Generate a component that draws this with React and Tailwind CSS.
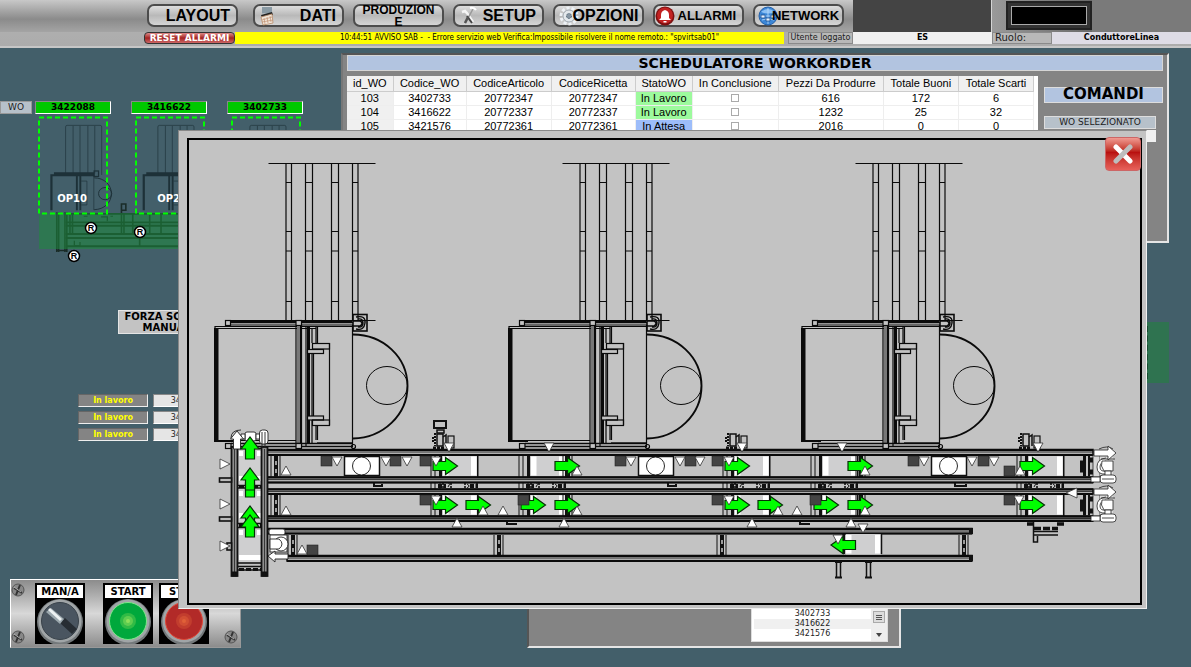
import React from "react";

const MACHINE_OFFSETS = [0, 294, 587];

function Machine({ x }) {
  return (
    <g transform={`translate(${x} 0)`} fill="none" stroke="#0a0a0a" strokeWidth="1.2">
      <path d="M268.500 163.500H375.500" />
      {[[286, 291.5], [305.5, 312.5], [331.5, 338.5], [352.5, 358]].map(([a, b]) => (
        <path key={a} d={`M${a} 163V320M${b} 163V320M${a} 182.500H${b}M${a} 231.500H${b}M${a} 251H${b}M${a} 301.500H${b}`} />
      ))}
      <path d="M225 320.500H375.500M225 325H353M231 322.700H353M215 326.500H353" />
      <path d="M231 321.500H352" strokeWidth="2" />
      <rect x="225.500" y="320.500" width="5" height="5" fill="#c3c3c3" />
      <rect x="296" y="320.500" width="5.500" height="5" fill="#c3c3c3" />
      <rect x="214" y="328" width="4.500" height="113" fill="#0a0a0a" stroke="none" />
      <path d="M215 326V329M218 328.500H316M218 440.500H296M214 441.500H234" />
      <rect x="297" y="326" width="3" height="118" fill="#777" stroke="none" />
      <path d="M296 326V444M301.500 325V447M306 326V446M316 327V343M317.500 327V343" />
      <path d="M301 326V444" strokeWidth="2" />
      <path d="M308.500 326V444" strokeWidth="3" />
      <path d="M312 329V343M312 353V443M313.500 353V416M316 425V440M317.500 425V440" />
      <rect x="312.500" y="343.500" width="17" height="5.500" />
      <rect x="307.500" y="349.500" width="16" height="4" fill="#c3c3c3" />
      <rect x="307.500" y="416" width="16" height="4" fill="#c3c3c3" />
      <rect x="312.500" y="420" width="17" height="5.500" />
      <path d="M329.500 343V425M352.500 325V447" />
      <rect x="353" y="314.500" width="14" height="16.500" strokeWidth="1.600" />
      <path d="M353 321H360Q364 323 360 326H353M356 317Q366 315 365 323T356 329M358 319Q363 318 363 323T358 327" strokeWidth="1.400" />
      <path d="M353 334.500C383 334.500 407.500 357 407.500 386S383 438 353 438.500" strokeWidth="1.900" />
      <ellipse cx="387" cy="385.500" rx="20.500" ry="19" strokeWidth="1" />
      <path d="M231 443.500H353M231 446.500H353M317 443H353" strokeWidth="1.500" />
      <rect x="225.500" y="443.500" width="5.500" height="5" fill="#c3c3c3" />
      <rect x="296" y="443.500" width="5.500" height="5" fill="#c3c3c3" />
      <circle cx="353.500" cy="446.500" r="2" />
    </g>
  );
}

function Beam({ x1, x2, y, h, dark }) {
  return (
    <g stroke="#0a0a0a">
      <rect x={x1} y={y} width={x2 - x1} height={h} fill={dark ? "#777" : "#b0b0b0"} strokeWidth="1.500" />
      <path d={`M${x1} ${y + 0.5}H${x2}`} strokeWidth="2" />
      <path d={`M${x1} ${y + 2.5}H${x2}`} strokeWidth="0.700" />
      <path d={`M${x1} ${y + h}H${x2}`} strokeWidth="2" />
    </g>
  );
}

function Plate({ x, y, w = 34, h = 21 }) {
  return (
    <g>
      <rect x={x} y={y} width={w} height={h} fill="#cfcfd0" />
      <rect x={x} y={y + 1} width="5.500" height={h - 2} fill="#fff" />
      <rect x={x + w - 6} y={y + 1} width="5.500" height={h - 2} fill="#fff" />
    </g>
  );
}

function Stop({ x, y, h = 22 }) {
  return (
    <g>
      <rect x={x} y={y} width="4" height={h} fill="#111" />
      <path d={`M${x + 2} ${y + 5}v4M${x + 2} ${y + 13}v4`} stroke="#ccc" strokeWidth="1.500" />
      <path d={`M${x + 6} ${y}v${h}M${x - 3} ${y}v${h}`} stroke="#111" strokeWidth="1" />
    </g>
  );
}

function Scanner({ x, tall }) {
  return (
    <g fill="none" stroke="#111" strokeWidth="1.500">
      {tall && <rect x={x - 7} y="421" width="12" height="7" strokeWidth="2" />}
      {tall && <path d={`M${x - 4} 430h7v3h-7z`} />}
      <rect x={x - 4} y="434" width="6" height="12" />
      <path d={`M${x - 6} 433v13M${x - 8} 437v5`} strokeDasharray="2 1" strokeWidth="2" />
      <path d={`M${x + 2} 437l3 -2v11`} />
      <rect x={x + 7} y="436" width="6" height="12" strokeWidth="1.200" />
      <path d={`M${x - 8} 448H${x + 4}`} strokeWidth="3" strokeDasharray="3 1" />
    </g>
  );
}

function Motor({ x, y }) {
  return (
    <g fill="#fff" stroke="#222" strokeWidth="0.800">
      <rect x={x} y={y - 11} width="7" height="22" fill="#d8d8d8" />
      <rect x={x + 7} y={y - 10} width="13" height="19" fill="#dcdcdc" stroke="none" />
      <path d={`M${x + 13} ${y - 8}q-9 1 -9 9t9 7`} />
      <path d={`M${x + 13} ${y - 5}q-6 1 -6 6t6 4`} fill="none" />
      <path d={`M${x + 9} ${y - 5}h11v10h-9q-4 -5 -2 -10z`} />
      <rect x={x + 12} y={y + 5} width="6" height="5" />
      <rect x={x + 7} y={y + 9} width="16" height="8" rx="3" />
      <path d={`M${x - 2} ${y + 11}h9v5h-9zM${x + 9} ${y + 13}h12`} />
      <path d={`M${x + 6} ${y - 17}q8 -4 14 0M${x + 8} ${y - 7}h14`} fill="none" />
      <path d={`M${x + 1} ${y - 16}h14v-4l8 7l-8 7v-4h-14z`} />
    </g>
  );
}

const CROSS_X = [443, 531, 735, 823, 1029];

function Line() {
  return (
    <g>
      {CROSS_X.map((x) => (
        <g key={x} fill="none" stroke="#111" strokeWidth="1">
          <path d={`M${x - 12} 456v66M${x - 8} 456v66M${x - 3} 456v60`} />
          <path d={`M${x} 483v6M${x + 8} 483v6M${x + 22} 483v6M${x + 34} 483v6`} strokeWidth="1.600" strokeDasharray="2 1" />
          <path d={`M${x - 5} 486h8M${x + 27} 486h8`} strokeWidth="4" strokeDasharray="4 1.500" />
          <path d={`M${x + 5} 487q3 -3 0 -5M${x + 24} 484q4 2 0 4`} />
        </g>
      ))}
      {[455.5, 494.5].map((y) => CROSS_X.map((x) => (
        <g key={`${x}-${y}`}>
          <Plate x={x} y={y} />
          <rect x={x - 4} y={y} width="3" height="22" fill="#111" />
          <rect x={x + 34} y={y} width="1.500" height="22" fill="#111" />
        </g>
      )))}
      {[566, 859].map((x) => <g key={x}><Stop x={x} y={455} /><Stop x={x} y={494} /></g>)}
      <Beam x1={262} x2={1093} y={449.5} h={5.5} />
      <Beam x1={267} x2={1093} y={477} h={5.5} />
      <Beam x1={262} x2={1093} y={489} h={5} />
      <Beam x1={267} x2={1093} y={516} h={5} dark />
      <Beam x1={267} x2={972} y={528.5} h={5} />
      <Beam x1={287} x2={972} y={555.5} h={5.5} />
      <path d="M374 483v3h8v-2M668 483v3h8v-2M955 483v3h11v-2M507 522v2h10M800 522v2h10" stroke="#111" strokeWidth="2" fill="none" />

      <Stop x={274} y={456} h={21} />
      <Stop x={274} y={495} h={21} />
      <Stop x={291} y={535} h={20} />
      <Stop x={497} y={535} h={20} />
      <Stop x={720} y={535} h={20} />
      <Stop x={962} y={535} h={20} />
      <path d="M970 529h2v4h-2zM970 556h2v4h-2z" stroke="#111" strokeWidth="2" />
      {[455.5, 494.5].map((y) => (
        <g key={y} fill="#111">
          <rect x="1080" y={y + 5} width="4" height="12" />
          <rect x="1083" y={y} width="3" height="21" />
          <rect x="1088" y={y} width="2" height="21" />
          <rect x="1090" y={y + 2} width="3" height="5" />
          <rect x="1090" y={y + 14} width="3" height="5" />
        </g>
      ))}

      {/* vertical conveyor */}
      <rect x="238" y="448" width="24" height="114" fill="#cfcfd0" />
      <path d="M239 451h4v5h-4zM257 451h4v5h-4zM239 476h4v5h-4zM257 476h4v5h-4zM239 491h4v5h-4zM257 491h4v5h-4zM239 513h4v5h-4zM257 513h4v5h-4zM239 530h4v5h-4zM257 530h4v5h-4zM239 555h22v5h-22z" fill="#fff" />
      <path d="M238 448.500h24M238 485.500h24M238 488h24M238 523.500h24M238 527.500h24M238 563h24M238 566.500h24M238 570h24" stroke="#111" strokeWidth="1.500" />
      <path d="M239 486.500h23M239 525.500h23M239 569.500h23" stroke="#111" strokeWidth="3" strokeDasharray="5 2" />
      {[231.5, 261.5].map((x) => (
        <g key={x} stroke="#111">
          <rect x={x} y="447" width="6" height="129" fill="#8e8e8e" strokeWidth="1.800" />
          <path d={`M${x + 3} 449V576`} strokeWidth="0.700" />
          <rect x={x + 1} y="572" width="4" height="4" fill="#111" />
        </g>
      ))}
      <g fill="#bbb" stroke="#111" strokeWidth="1.600">
        <rect x="219.500" y="478" width="12" height="4" />
        <rect x="219.500" y="517" width="12" height="4" />
        <rect x="227" y="543" width="4.500" height="7" />
      </g>
      <g fill="#fff" stroke="#222" strokeWidth="0.900">
        <rect x="245" y="432" width="11" height="9" rx="2" />
        <path d="M241 434h4v5h-4zM256 434h4v5h-4z" />
        <rect x="259.500" y="430" width="8.500" height="14" rx="3" />
        <path d="M262 432v16M265 432v16" fill="none" />
        <path d="M231 438q0 -8 10 -8" fill="none" />
        <path d="M233.500 449v-10h-3l6.500 -8l6.500 8h-3v10z" />
        <rect x="269" y="529" width="16" height="6" rx="2" />
        <rect x="270" y="535" width="17" height="17" />
        <circle cx="281" cy="544" r="7" />
        <path d="M270 539h9q6 5 0 10h-9z" />
        <path d="M288 559H275v3l-7 -6l7 -5v3h13z" />
      </g>

      <Plate x={846} y={534} w={35} h={20.5} />
      <rect x="842" y="534" width="3" height="20" fill="#111" />
      <path d="M881.500 534v20M836.500 561v17M840.500 561v17M866.500 561v17M870.500 561v17" stroke="#111" strokeWidth="1.500" />
      <path d="M835 562h7M865 562h7M835 577.500h7M865 577.500h7" stroke="#111" strokeWidth="2" />
      <g stroke="#111" fill="#777">
        <path d="M1033.500 522v20h4v-6M1034 531.500h24M1034 535h24" strokeWidth="1.500" fill="none" />
        <path d="M1027 524h7M1057 524h7M1034 528.500h24" strokeWidth="3.500" strokeDasharray="7 2" />
      </g>

      <Scanner x={441} tall />
      <Scanner x={734} />
      <Scanner x={1027} />
      <Motor x={1093} y={466} />
      <Motor x={1093} y={505} />

      {/* pallet positions */}
      {[344.5, 638.5, 931.5].map((x) => (
        <g key={x} stroke="#111">
          <rect x={x} y="456.500" width="35" height="19" fill="#fff" strokeWidth="1.500" />
          <circle cx={x + 17} cy="466" r="9" fill="#fff" strokeWidth="0.900" />
        </g>
      ))}
    </g>
  );
}

const SQUARES = [
  [321, 456], [390, 456], [420, 456], [615, 456], [685, 456], [712, 456], [908, 456], [978, 456], [1004, 466],
  [420, 495], [712, 495], [1004, 495], [307, 545],
];
const FRONT_SQUARES = [[518, 495], [810, 495]];
const RIGHT_ARROWS = [
  [433, 466], [555, 466], [725, 466], [848, 466], [1020, 466],
  [433, 505], [466, 505], [521, 505], [555, 505], [725, 505], [758, 505], [814, 505], [848, 505], [1020, 505],
];
const DOWN = [
  [337, 457], [386, 457], [407, 457], [436, 457], [631, 457], [680, 457], [700, 457], [729, 457], [924, 457], [972, 457], [994, 457],
  [449, 443], [549, 443], [742, 443], [842, 443], [1038, 443], [436, 496], [729, 496], [1019, 496], [863, 524], [838, 535],
];
const UP = [
  [286, 466], [577, 466], [865, 466], [1020, 466], [286, 506], [483, 506], [503, 506], [577, 506], [778, 506], [797, 506], [865, 506],
  [457, 518], [564, 518], [752, 518], [851, 518], [302, 545],
];

function PlantDrawing() {
  return (
    <svg viewBox="189 140 951 463" className="block w-full" role="img" aria-label="Linea">
      {MACHINE_OFFSETS.map((x) => <Machine key={x} x={x} />)}
      <Line />
      <g fill="#444" stroke="#222" strokeWidth="0.600">
        {SQUARES.map(([x, y]) => <rect key={`${x}-${y}`} x={x} y={y} width="11" height="10" />)}
      </g>
      <g fill="#00ff00" stroke="#063006" strokeWidth="1.200">
        {RIGHT_ARROWS.map(([x, y]) => (
          <path key={`${x}-${y}`} d={`M${x} ${y - 4.5}h12.500v-4l12 8.500l-12 8.500v-4h-12.500z`} />
        ))}
        <path d="M855.500 540.500h-12.500v-4l-12 8.500l12 8.500v-4h12.500z" />
        <path d="M245.500 483h9v14h-9z" />
        {[437, 468, 506, 515].map((y) => (
          <path key={y} d={`M245.500 ${y + 22}v-10h-4.500l9 -12l9 12h-4.500v10z`} />
        ))}
      </g>
      <g fill="#444" stroke="#222" strokeWidth="0.600">
        {FRONT_SQUARES.map(([x, y]) => <rect key={x} x={x} y={y} width="11" height="10" />)}
      </g>
      <g fill="#fff" stroke="#333" strokeWidth="0.800">
        {DOWN.map(([x, y]) => <path key={`${x}-${y}`} d={`M${x - 5} ${y}h10l-5 9z`} />)}
        {UP.map(([x, y]) => <path key={`${x}-${y}`} d={`M${x - 5} ${y + 9}h10l-5 -9z`} />)}
        {[464, 504, 546].map((y) => <path key={y} d={`M220 ${y - 5}v10l10 -5z`} />)}
        <path d="M1077 488v10l-11 -5z" />
      </g>
    </svg>
  );
}

function Overview() {
  return (
    <svg viewBox="36 114 304 150" className="ml-9 block h-[150px] w-[304px]" role="img" aria-label="Panoramica linea">
      <g transform="translate(-16.700 75.500) scale(0.314 0.306)" opacity="0.800">
        {MACHINE_OFFSETS.map((x) => (
          <g key={x} fill="none" stroke="#14262c" strokeWidth="3">
            <path d={`M${x + 262} 325V168q0 -5 5 -5h105q5 0 5 5v157M${x + 286} 165V320M${x + 308} 165V320M${x + 333} 165V320M${x + 355} 165V320`} strokeWidth="2" />
            <path d={`M${x + 217} 440V326H${x + 353}M${x + 225} 320H${x + 353}`} strokeWidth="7" />
            <path d={`M${x + 298} 326V440M${x + 309} 326V440`} strokeWidth="6" />
            <path d={`M${x + 312} 345h18v78h-18M${x + 352} 325V440`} strokeWidth="2" />
            <rect x={x + 353} y="312" width="14" height="18" strokeWidth="4" />
            <path d={`M${x + 353} 334.500C${x + 385} 334.500 ${x + 408} 357 ${x + 408} 386S${x + 385} 438 ${x + 353} 438.500`} />
            <ellipse cx={x + 388} cy="386" rx="21" ry="20" />
          </g>
        ))}
        <g fill="none" stroke="#102018" strokeWidth="6">
          <path d="M262 452H1090M262 480H1090M262 491H1090M262 518H1090M262 531H970M262 558H970" />
          <path d="M234 448V577M240 448V577M260 448V577M266 448V577M234 572H264" strokeWidth="5" />
          <path d="M276 452V518M284 452V518M440 440V520M448 452V520M476 452V520M530 452V520M566 452V520M498 530V558M440 420h14v20h-14z" strokeWidth="5" />
          <path d="M320 460h12M375 462h20v14M405 460h8M290 540v16h18v-12" strokeWidth="4" />
        </g>
      </g>
      <rect x="39" y="213" width="300" height="36" fill="#1e8a3c" opacity="0.550" />
      <g fill="none" stroke="#00ff00" strokeWidth="2" strokeDasharray="5 3">
        <rect x="39" y="117.500" width="68" height="96" />
        <rect x="136" y="117.500" width="68" height="96" />
        <rect x="232" y="117.500" width="68" height="96" />
      </g>
      <g className="font-['DejaVu_Sans'] text-[10px] font-bold" fill="#fff" textAnchor="middle">
        <text x="72" y="202">OP10</text>
        <text x="172" y="202">OP20</text>
      </g>
      <g className="font-['Liberation_Sans'] text-[9px] font-bold" textAnchor="middle">
        {[[91, 228], [140, 232], [74, 256]].map(([x, y]) => (
          <g key={x}>
            <circle cx={x} cy={y} r="5.500" fill="#fff" stroke="#000" strokeWidth="1.500" />
            <text x={x} y={y + 3} fill="#000">R</text>
          </g>
        ))}
      </g>
    </svg>
  );
}

function NavIcon({ kind }) {
  if (kind === "dati") {
    return (
      <svg viewBox="0 0 16 20" className="h-5 w-4 shrink-0">
        <path d="M3 1h10v7H3z" fill="#aab4bb" />
        <path d="M3 2h10M3 4h10M3 6h10" stroke="#5c7480" strokeWidth="0.800" />
        <path d="M2 9l11 -3l1 3l-11 3z" fill="#222" />
        <path d="M2 11l11 -3l1 9l-10 2z" fill="#f1e6da" stroke="#b98b68" strokeWidth="0.800" />
        <path d="M5 12l1 6M8 11l1 6M11 10l1 6M3 14l10 -3M3 16l11 -2" stroke="#c08f70" strokeWidth="0.700" />
      </svg>
    );
  }
  if (kind === "setup") {
    return (
      <svg viewBox="0 0 20 20" className="h-5 w-5 shrink-0" fill="none">
        <path d="M3 6l3 -1l2 2l6 9" stroke="#f5f5f5" strokeWidth="2.500" />
        <path d="M14 3l-5 9l-3 5" stroke="#999" strokeWidth="1.500" />
        <path d="M8 10l5 7" stroke="#444" strokeWidth="2" />
        <path d="M9 11l-3 6" stroke="#555" strokeWidth="2.500" />
        <path d="M11 2q4 -1 6 2" stroke="#fff" strokeWidth="2" />
      </svg>
    );
  }
  if (kind === "opzioni") {
    return (
      <svg viewBox="0 0 20 20" className="h-5 w-5 shrink-0">
        <circle cx="10" cy="10" r="8" fill="none" stroke="#eef2f6" strokeWidth="3" strokeDasharray="3 2" />
        <circle cx="10" cy="10" r="6" fill="#e3e8ec" stroke="#a4adb5" strokeWidth="1" />
        <circle cx="10" cy="10" r="2.500" fill="#8796a3" stroke="#55697a" strokeDasharray="2 1" />
      </svg>
    );
  }
  if (kind === "allarmi") {
    return (
      <svg viewBox="0 0 20 20" className="h-5 w-5 shrink-0">
        <circle cx="10" cy="10" r="9.500" fill="#7c1010" />
        <circle cx="10" cy="9.500" r="8" fill="#c22222" />
        <path d="M10 4q4 1 4 5v3l2 2H4l2 -2V9q0 -4 4 -5zM8.500 15h3v1.500h-3z" fill="#fff" />
      </svg>
    );
  }
  if (kind === "network") {
    return (
      <svg viewBox="0 0 20 20" className="h-5 w-5 shrink-0">
        <circle cx="10" cy="10" r="9" fill="#3b86d6" stroke="#2460a8" />
        <path d="M3 6q7 -6 14 0q-7 3 -14 0z" fill="#8cc0f3" />
        <path d="M2 10h16M10 2v16M4 14q6 -3 12 0" stroke="#b9dbfa" strokeWidth="0.800" fill="none" />
        <path d="M3 9h4v3H3zM8 12h4v3H8zM13 9h4v3h-4z" fill="#e5f2ff" stroke="#1d4f90" strokeWidth="0.800" />
      </svg>
    );
  }
  return null;
}

const NAV = [
  { label: "LAYOUT", cls: "text-base justify-end pr-1.5 mr-1.5" },
  { label: "DATI", icon: "dati", cls: "text-base justify-between pl-1 pr-1.5" },
  { label: "PRODUZIONE", lines: ["PRODUZION", "E"], cls: "text-[12px] leading-3 justify-center" },
  { label: "SETUP", icon: "setup", cls: "text-base justify-between pl-1 pr-1.5" },
  { label: "OPZIONI", icon: "opzioni", overlap: true, cls: "text-base justify-center" },
  { label: "ALLARMI", icon: "allarmi", cls: "text-[13px] justify-between pr-1.5" },
  { label: "NETWORK", icon: "network", overlap: true, cls: "text-[13px] justify-center" },
];

function Header() {
  return (
    <header className="flex h-12 flex-col border-b-2 border-[#c6c6c6] bg-linear-to-b from-[#b4b4b4] to-[#acacac]">
      <div className="flex h-8 shrink-0">
        <div className="flex min-w-0 flex-1 bg-linear-to-b from-[#c8c8c8] via-[#8b8b8b] via-60% to-[#a4a4a4] pt-1">
          <div className="w-[147px] shrink-0" />
          <nav className="flex h-[23px] gap-[9px]">
            {NAV.map((n) => (
              <button
                key={n.label}
                className={`flex h-[23px] w-[91px] items-center rounded-[7px] border-2 border-[#4c4c4c] bg-linear-to-b from-[#dedede] via-[#b9b9b9] to-[#d5d5d5] font-['Liberation_Sans',sans-serif] font-bold text-black ${n.cls}`}
              >
                {n.icon && <NavIcon kind={n.icon} />}
                {n.lines
                  ? <span className="text-center">{n.lines[0]}<br />{n.lines[1]}</span>
                  : <span className={n.overlap ? "-ml-1.5" : ""}>{n.label}</span>}
              </button>
            ))}
          </nav>
        </div>
        <div className="w-[138px] shrink-0 bg-[#444]" />
        <div className="flex w-[101px] shrink-0 justify-end border-l border-[#d5d5d5] bg-linear-to-r from-[#9a9a9a] to-[#6a6a6a]">
          <div className="mt-px h-[29px] w-[86px] border-2 border-[#222] bg-[#333] p-[3px]">
            <div className="h-full border border-[#aaa] bg-black" />
          </div>
        </div>
        <div className="w-[99px] shrink-0 bg-[#7a7a7a]" />
      </div>
      <div className="flex h-3 shrink-0 font-['DejaVu_Sans',sans-serif] text-[8px] leading-3 text-black">
        <div className="w-36 shrink-0" />
        <button className="w-[91px] shrink-0 overflow-hidden rounded-[4px] border border-[#333] bg-linear-to-b from-[#d88] via-[#a32020] to-[#c66] text-[9px] leading-[10px] font-bold text-white">RESET ALLARMI</button>
        <div className="min-w-0 flex-1 overflow-hidden bg-[#ffff00] pl-10 text-center font-['DejaVu_Sans_Condensed','DejaVu_Sans',sans-serif] text-[8px] whitespace-nowrap">
          10:44:51 AVVISO SAB - &nbsp;- Errore servizio web Verifica:Impossibile risolvere il nome remoto.: "spvirtsab01"
        </div>
        <div className="ml-1 w-[65px] shrink-0 border border-[#8a8a8a] bg-[#b8b8b8] text-center leading-[10px] whitespace-nowrap text-[#222]">Utente loggato</div>
        <div className="w-[139px] shrink-0 bg-[#f0f0f0] text-center font-bold">ES</div>
        <div className="w-[60px] shrink-0 border border-[#8a8a8a] bg-[#b8b8b8] pl-0.5 text-[10px] leading-[10px] text-[#222]">Ruolo:</div>
        <div className="w-[139px] shrink-0 bg-[#dedce6] text-center font-bold">ConduttoreLinea</div>
      </div>
    </header>
  );
}

const COLS = ["id_WO", "Codice_WO", "CodiceArticolo", "CodiceRicetta", "StatoWO", "In Conclusione", "Pezzi Da Produrre", "Totale Buoni", "Totale Scarti"];
const ROWS = [
  ["103", "3402733", "20772347", "20772347", "In Lavoro", null, "616", "172", "6"],
  ["104", "3416622", "20772337", "20772337", "In Lavoro", null, "1232", "25", "32"],
  ["105", "3421576", "20772361", "20772361", "In Attesa", null, "2016", "0", "0"],
];

function Scheduler() {
  return (
    <section className="h-[190px] border-2 border-t-[#555] border-r-[#e5e5e5] border-b-[#e5e5e5] border-l-[#777] bg-[#848484] pr-1 pl-1">
      <h1 className="h-4 border border-[#d5d5d5] bg-[#b2c4e0] text-center text-[14px] leading-[14px] font-bold">SCHEDULATORE WORKORDER</h1>
      <div className="mt-[5px] flex gap-1.5">
        <div className="min-w-0 flex-1 bg-white pr-1">
          <table className="w-full table-fixed border-collapse text-center font-['Liberation_Sans',sans-serif] text-[11px] leading-[13px] whitespace-nowrap">
            <colgroup>
              <col className="w-[46px]" /><col className="w-[73px]" /><col className="w-[85px]" /><col className="w-[84px]" />
              <col className="w-[57px]" /><col className="w-[86px]" /><col className="w-[105px]" /><col className="w-[75px]" /><col className="w-[75px]" />
            </colgroup>
            <thead>
              <tr className="h-[15px] bg-[#f0f0f0]">
                {COLS.map((c) => <th key={c} className="border-r border-b border-[#ccc] p-0 font-normal">{c}</th>)}
              </tr>
            </thead>
            <tbody>
              {ROWS.map((r) => (
                <tr key={r[0]} className="h-[14px]">
                  {r.map((c, i) => (
                    <td key={i} className={`border-r border-b border-[#eee] p-0 ${i === 0 ? "bg-[#f0f0f0]" : i !== 4 ? "" : c === "In Attesa" ? "bg-[#9dbdfa]" : "bg-[#9dfa9d]"}`}>
                      {c === null ? <input type="checkbox" aria-label={`In Conclusione ${r[0]}`} className="mx-auto block size-2 appearance-none border border-[#aaa] bg-white" /> : c}
                    </td>
                  ))}
                </tr>
              ))}
            </tbody>
          </table>
        </div>
        <div className="w-[119px] shrink-0 pt-[11px]">
          <h2 className="h-4 border border-[#ddd] bg-[#b2c4e0] text-center text-[15px] leading-[13px] font-bold">COMANDI</h2>
          <label htmlFor="wo-sel" className="mt-[13px] block h-[13px] w-28 border border-[#ddd] bg-[#b7c1ca] text-center text-[9px] leading-[11px] text-[#222]">WO SELEZIONATO</label>
          <input id="wo-sel" className="mt-px block h-3 w-28 bg-[#f0f0f0]" />
        </div>
      </div>
    </section>
  );
}

function Screw() {
  return (
    <svg viewBox="0 0 14 14" className="size-3.5">
      <circle cx="7" cy="7" r="6" fill="#888" stroke="#555" />
      <path d="M3 5l8 5M9 2l-4 10" stroke="#333" strokeWidth="2" />
      <path d="M3 4l7 5" stroke="#ccc" strokeWidth="0.800" />
    </svg>
  );
}

function PanelButton({ label, kind }) {
  return (
    <button className="flex w-[50px] flex-col items-center bg-black pt-0.5" aria-label={label}>
      <span className="block h-[13px] w-[46px] bg-white text-center text-[10px] leading-[13px] font-bold text-black">{label}</span>
      <svg viewBox="0 0 48 46" className="block h-[46px] w-12">
        <circle cx="24" cy="24" r="23" fill="#74797b" />
        <circle cx="24" cy="23" r="21.500" fill="#a0a5a7" />
        <circle cx="24" cy="23" r="18.500" fill={kind === "man" ? "#4a5560" : kind === "start" ? "#00a83c" : "#b22a28"} stroke={kind === "start" ? "#7fe88a" : kind === "stop" ? "#e04838" : "#39424a"} />
        {kind === "man" ? (
          <g>
            <path d="M24 25l5 -5l12 11l-5 5z" fill="#272d33" />
            <path d="M10 14l5 -4l13 11l-4 5z" fill="#9ba7ad" />
            <path d="M12 12l2 -2l12 11l-2 2z" fill="#eef2f3" />
          </g>
        ) : (
          <g fill={kind === "start" ? "#8de05a" : "#e06038"}>
            <circle cx="24" cy="23" r="8" opacity="0.350" />
            <circle cx="24" cy="23" r="5" opacity="0.500" />
            <circle cx="24" cy="23" r="2" />
          </g>
        )}
      </svg>
    </button>
  );
}

function LeftColumn() {
  return (
    <aside className="w-[341px] shrink-0 pt-[53px]">
      <div className="flex h-[13px] gap-[3px] text-center text-[9px] leading-[11px]">
        <span className="w-8 border border-[#999] bg-[#b7c1ca] text-[#222]">WO</span>
        <div className="flex gap-5 font-bold">
          {["3422088", "3416622", "3402733"].map((n) => (
            <span key={n} className="w-[76px] border border-t-[#888] border-r-white border-b-white border-l-[#888] bg-[#00c800]">{n}</span>
          ))}
        </div>
      </div>
      <Overview />
      <button className="mt-[46px] ml-[118px] block h-6 w-[104px] border border-[#e5e5e5] bg-[#c3c3c3] text-center text-[10px] leading-[11px] font-bold">FORZA SCARICO MANUALE</button>
      <div className="mt-[60px] ml-[78px] flex flex-col gap-1 text-[8px] leading-[11px]">
        {["3422088", "3416622", "3402733"].map((n) => (
          <div key={n} className="flex h-[13px] gap-[5px] text-center">
            <span className="w-[70px] border border-t-[#666] border-r-[#eee] border-b-[#eee] border-l-[#666] bg-[#848484] font-bold text-[#ffff00]">In lavoro</span>
            <span className="w-[71px] border border-t-[#888] border-r-white border-b-white border-l-[#888] bg-[#e5e5e5] text-[#222]">{n}</span>
          </div>
        ))}
      </div>
      <div className="mt-[138px] ml-[10px] flex h-[69px] w-[231px] justify-between border border-t-white border-r-[#999] border-b-[#999] border-l-white bg-linear-to-b from-[#8c8c8c] via-[#d8d8d8] to-[#8c8c8c] py-[3px] pr-0.5">
        <div className="flex w-6 flex-col items-start justify-between"><Screw /><Screw /></div>
        <div className="flex flex-1">
          <PanelButton label="MAN/A" kind="man" />
          <span className="w-[18px]" />
          <PanelButton label="START" kind="start" />
          <span className="w-1.5" />
          <PanelButton label="STOP" kind="stop" />
        </div>
        <div className="flex flex-col justify-end"><Screw /></div>
      </div>
    </aside>
  );
}

function OrderList() {
  return (
    <section className="ml-[186px] flex h-[70px] w-[374px] justify-end border-2 border-t-[#555] border-r-[#e5e5e5] border-b-[#e5e5e5] border-l-[#555] bg-[#848484] pt-7 pr-[11px]">
      <div className="flex h-[34px] w-[137px] border border-[#ddd] bg-white text-[8px] leading-[10px] text-[#222]">
        <ul className="flex-1 pl-0.5 text-center">
          <li>3402733</li><li className="bg-[#f0f0f0]">3416622</li><li>3421576</li>
        </ul>
        <div className="flex w-4 flex-col items-center justify-between bg-[#eee] pt-0.5 pb-1">
          <button aria-label="Scorri" className="flex h-3 w-3 flex-col items-center justify-center gap-px border border-[#aaa] bg-[#ddd]">
            <i className="h-px w-1.5 bg-[#555]" /><i className="h-px w-1.5 bg-[#555]" /><i className="h-px w-1.5 bg-[#555]" />
          </button>
          <svg viewBox="0 0 6 4" className="h-1 w-1.5"><path d="M0 0h6l-3 4z" fill="#444" /></svg>
        </div>
      </div>
    </section>
  );
}

export default function App() {
  return (
    <div className="relative flex min-h-screen flex-col overflow-hidden bg-[#435f6a] font-['DejaVu_Sans','Noto_Sans',sans-serif] text-black">
      <Header />
      <main className="flex flex-1">
        <LeftColumn />
        <div className="min-w-0 flex-1 pt-[5px] pr-[22px]">
          <Scheduler />
          <div className="mt-[79px] flex h-[61px] justify-end">
            <div className="flex w-12 items-stretch bg-[#2f7350] pl-[25px]">
              <div className="my-1 border-l-2 border-dashed border-[#174a30]" />
            </div>
          </div>
          <div className="mt-[195px]"><OrderList /></div>
        </div>
      </main>
      <div role="dialog" aria-label="Linea" className="absolute top-[130px] right-11 left-[178px] border border-t-[#888] border-r-[#f0f0f0] border-b-[#f0f0f0] border-l-[#888] bg-[#c3c3c3] pt-[7px] pr-1 pb-[3px] pl-2">
        <div className="border-2 border-black">
          <PlantDrawing />
        </div>
        <button aria-label="Chiudi" className="absolute top-1.5 right-[5px] flex h-[34px] w-9 items-center justify-center rounded-[4px] border border-[#c66] bg-linear-to-b from-[#f09a92] via-[#b90f0f] via-45% to-[#e8605a]">
          <svg viewBox="0 0 20 20" className="size-5" strokeWidth="5" strokeLinecap="round">
            <path d="M3 3l14 14" stroke="#fff" />
            <path d="M17 3L3 17" stroke="#bdbdbd" />
          </svg>
        </button>
      </div>
    </div>
  );
}
